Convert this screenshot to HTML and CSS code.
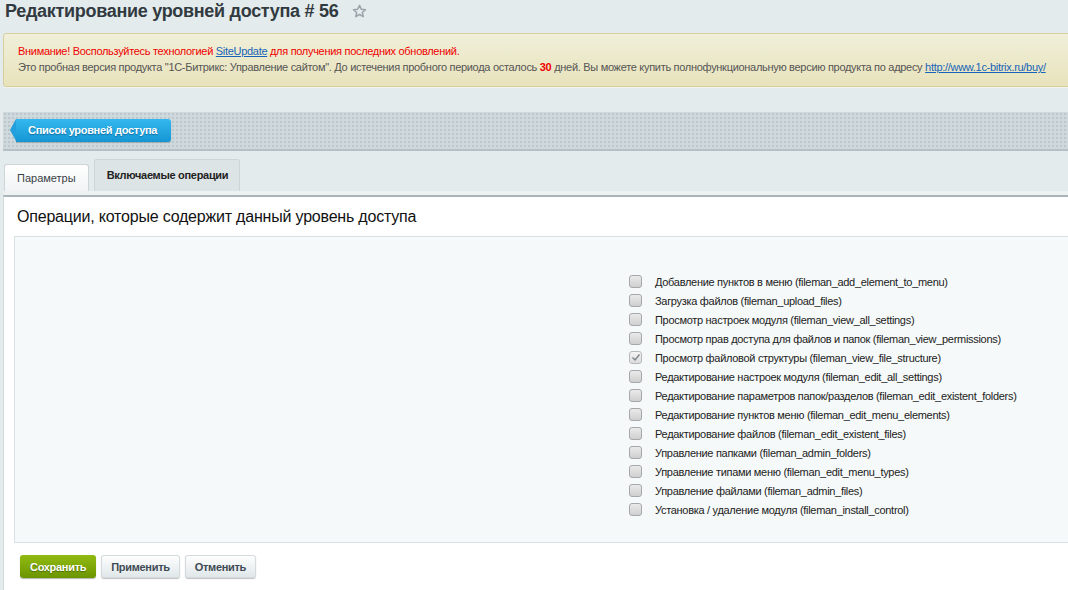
FILE: index.html
```html
<!DOCTYPE html>
<html lang="ru">
<head>
<meta charset="utf-8">
<title>Редактирование уровней доступа # 56</title>
<link rel="stylesheet" href="styles.css">
</head>
<body>
<div class="page">
  <h1 class="title">Редактирование уровней доступа # 56
    <svg class="star" width="15" height="15" viewBox="0 0 16 16"><path d="M8 1.5l1.9 4.1 4.5.5-3.4 3 1 4.4L8 11.2l-4 2.3 1-4.4-3.4-3 4.5-.5z" fill="none" stroke="#9aa4aa" stroke-width="1.6" stroke-linejoin="round"/></svg>
  </h1>

  <div class="notice">
    <div class="notice-warn">Внимание! Воспользуйтесь технологией <a href="#">SiteUpdate</a> для получения последних обновлений.</div>
    <div class="notice-info">Это пробная версия продукта "1С-Битрикс: Управление сайтом". До истечения пробного периода осталось <b class="days">30</b> дней. Вы можете купить полнофункциональную версию продукта по адресу <a href="#">http://www.1c-bitrix.ru/buy/</a></div>
  </div>

  <div class="toolbar">
    <a class="back-btn" href="#">Список уровней доступа</a>
  </div>

  <div class="tabs">
    <div class="tab">Параметры</div>
    <div class="tab tab-active">Включаемые операции</div>
  </div>

  <div class="content">
    <h2 class="heading">Операции, которые содержит данный уровень доступа</h2>
    <div class="box">
      <div class="box-left"></div>
      <ul class="ops">
        <li><span class="cb"></span>Добавление пунктов в меню (fileman_add_element_to_menu)</li>
        <li><span class="cb"></span>Загрузка файлов (fileman_upload_files)</li>
        <li><span class="cb"></span>Просмотр настроек модуля (fileman_view_all_settings)</li>
        <li><span class="cb"></span>Просмотр прав доступа для файлов и папок (fileman_view_permissions)</li>
        <li><span class="cb cb-checked"><svg width="10" height="9" viewBox="0 0 10 9"><path d="M1.5 4.5l2.5 2.5 4.5-5.5" fill="none" stroke="#7d8487" stroke-width="1.4"/></svg></span>Просмотр файловой структуры (fileman_view_file_structure)</li>
        <li><span class="cb"></span>Редактирование настроек модуля (fileman_edit_all_settings)</li>
        <li><span class="cb"></span>Редактирование параметров папок/разделов (fileman_edit_existent_folders)</li>
        <li><span class="cb"></span>Редактирование пунктов меню (fileman_edit_menu_elements)</li>
        <li><span class="cb"></span>Редактирование файлов (fileman_edit_existent_files)</li>
        <li><span class="cb"></span>Управление папками (fileman_admin_folders)</li>
        <li><span class="cb"></span>Управление типами меню (fileman_edit_menu_types)</li>
        <li><span class="cb"></span>Управление файлами (fileman_admin_files)</li>
        <li><span class="cb"></span>Установка / удаление модуля (fileman_install_control)</li>
      </ul>
    </div>
    <div class="buttons">
      <button class="btn btn-save">Сохранить</button>
      <button class="btn">Применить</button>
      <button class="btn">Отменить</button>
    </div>
  </div>
</div>
</body>
</html>
```

FILE: styles.css
```css
html, body {
  margin: 0;
  padding: 0;
}
body {
  background: #e4ebed;
  font-family: "Liberation Sans", Arial, sans-serif;
  color: #333;
  width: 1068px;
  height: 590px;
  overflow: hidden;
}
.page {
  width: 1080px;
}
.title {
  margin: 0;
  padding: 0 0 0 5px;
  height: 22px;
  font-size: 18px;
  line-height: 20px;
  font-weight: bold;
  letter-spacing: -0.3px;
  color: #313a40;
  display: flex;
  align-items: center;
}
.star {
  margin-left: 14px;
  margin-top: 1px;
}
.notice {
  margin: 11px 0 0 3px;
  border: 1px solid #d5ce9e;
  border-radius: 3px;
  background: linear-gradient(#f0efd9, #e8e3bc);
  padding: 9px 14px 11px;
  font-size: 11px;
  line-height: 16px;
  letter-spacing: -0.3px;
  white-space: nowrap;
  box-shadow: 0 1px 0 #f4f4ec;
}
.notice-warn {
  color: #ef0000;
}
.notice-info {
  color: #555;
}
.notice a {
  color: #1664b8;
  text-decoration: underline;
}
.days {
  color: #ef0000;
}
.toolbar {
  margin: 25px 0 0 3px;
  background-color: #cfd9dd;
  background-image: radial-gradient(circle, #bcc7cc 0.8px, transparent 1px);
  background-size: 4px 4px;
  border-bottom: 2px solid #b5c0c4;
  display: flex;
  align-items: flex-start;
  padding: 7px 0 0 7px;
  box-sizing: border-box;
  height: 39px;
}
.back-btn {
  position: relative;
  display: block;
  height: 23px;
  line-height: 22px;
  margin-left: 6px;
  padding: 0 14px 0 12px;
  background: linear-gradient(#34b8ee, #1596d4);
  border-radius: 0 3px 3px 0;
  color: #fff;
  font-size: 11px;
  font-weight: bold;
  letter-spacing: -0.3px;
  text-decoration: none;
  text-shadow: 0 1px 1px rgba(0, 60, 110, 0.5);
  box-shadow: 0 1px 1px rgba(0, 0, 0, 0.2);
}
.back-btn::before {
  content: "";
  position: absolute;
  left: -6px;
  top: 0;
  border-style: solid;
  border-width: 11.5px 6px 11.5px 0;
  border-color: transparent #239fdc transparent transparent;
}
.tabs {
  margin: 8px 0 0 4px;
  display: flex;
  align-items: flex-end;
  gap: 5px;
  height: 32px;
  border-bottom: 4px solid #eef2f3;
}
.tab {
  height: 27px;
  box-sizing: border-box;
  padding: 0 12px;
  line-height: 26px;
  font-size: 11px;
  color: #3a4247;
  background: linear-gradient(#ffffff, #f1f4f5);
  border: 1px solid #cdd5d8;
  border-bottom: none;
  border-radius: 3px 3px 0 0;
}
.tab-active {
  height: 32px;
  line-height: 31px;
  background: #dde4e6;
  font-weight: bold;
  letter-spacing: -0.3px;
  color: #222;
  padding: 0 11px 0 12px;
}
.content {
  margin-left: 3px;
  background: #fff;
  border-top: 2px solid #a9b4b8;
  border-left: 1px solid #d4dbdd;
  padding: 0 0 20px 10px;
  height: 400px;
}
.heading {
  margin: 0;
  padding: 11px 0 0 3px;
  height: 28px;
  font-size: 16px;
  line-height: 18px;
  font-weight: normal;
  letter-spacing: -0.2px;
  color: #111;
}
.box {
  background: #f5f9f9;
  border: 1px solid #d8e2e4;
  height: 307px;
  box-sizing: border-box;
  display: grid;
  grid-template-columns: 614px 1fr;
}
.ops {
  list-style: none;
  margin: 0;
  padding: 35px 0 0 0;
}
.ops li {
  height: 19px;
  display: flex;
  align-items: center;
  font-size: 11px;
  letter-spacing: -0.3px;
  color: #222;
}
.cb {
  width: 11px;
  height: 11px;
  border: 1px solid #a4a8aa;
  border-radius: 3px;
  background: linear-gradient(#eaeaea, #cfcfcf);
  margin-right: 13px;
  display: flex;
  align-items: center;
  justify-content: center;
  box-sizing: content-box;
}
.cb-checked {
  background: linear-gradient(#f4f4f4, #dcdcdc);
  border-color: #b6babb;
}
.buttons {
  display: flex;
  gap: 5px;
  padding: 12px 0 0 6px;
}
.btn {
  height: 23px;
  padding: 0 10px;
  font-family: "Liberation Sans", Arial, sans-serif;
  font-size: 11px;
  font-weight: bold;
  letter-spacing: -0.3px;
  color: #3f4b54;
  background: linear-gradient(#ffffff, #dfe6e8);
  border: none;
  border-radius: 3px;
  box-shadow: 0 1px 1px rgba(0, 0, 0, 0.25), inset 0 0 0 1px #d4dbdd;
  cursor: pointer;
}
.btn-save {
  padding: 0 10px;
  color: #fff;
  background: linear-gradient(#91bb11, #6c9500);
  box-shadow: 0 1px 1px rgba(0, 0, 0, 0.3);
  text-shadow: 0 1px 1px rgba(50, 70, 0, 0.6);
}
```
